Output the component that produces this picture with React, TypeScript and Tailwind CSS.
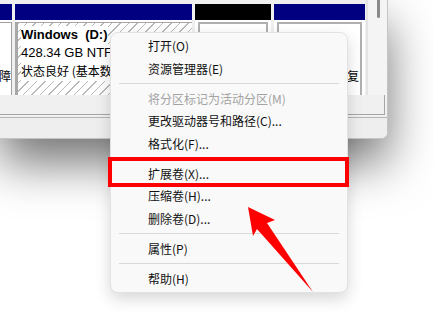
import React from "react";

type Item = { t: string; d?: boolean } | "sep";

const items: Item[] = [
  { t: "打开(O)" },
  { t: "资源管理器(E)" },
  "sep",
  { t: "将分区标记为活动分区(M)", d: true },
  { t: "更改驱动器号和路径(C)..." },
  { t: "格式化(F)..." },
  "sep",
  { t: "扩展卷(X)..." },
  { t: "压缩卷(H)..." },
  { t: "删除卷(D)..." },
  "sep",
  { t: "属性(P)" },
  "sep",
  { t: "帮助(H)" },
];

export default function App() {
  return (
    <div className="relative w-[433px] h-[313px] overflow-hidden bg-white font-['Liberation_Sans','Noto_Sans_CJK_SC',sans-serif] text-[12px] text-black">
      {/* Background window */}
      <div className="flex flex-col w-[388px] h-[139px] bg-[#f0f0f0] border-r border-b border-[#c4c4c4] rounded-br-[6px] shadow-[0_24px_48px_rgba(0,0,0,0.55)]">
        <div className="flex h-[95px]">
          {/* main volume area */}
          <div className="flex w-[366px] gap-[3px] pt-[4px] bg-[#f0f0f0] overflow-hidden">
            {/* col 1 */}
            <div className="flex flex-col w-[12px] shrink-0">
              <div className="h-[16px] bg-[#000080]" />
              <div className="flex-1 bg-white pt-[2px]">
                <div className="h-full border-t border-r border-[#a0a0a0] overflow-hidden flex flex-col justify-end pb-[10px]">
                  <div className="flex justify-end whitespace-nowrap leading-[18px] font-['Noto_Sans_CJK_SC',sans-serif]">故障</div>
                </div>
              </div>
            </div>
            {/* col 2 - Windows D: */}
            <div className="flex flex-col w-[177px] shrink-0">
              <div className="h-[16px] bg-[#000080]" />
              <div className="flex-1 bg-white pt-[2px]">
                <div className="h-full border-t border-l-[3px] border-[#a8a8a8] bg-[repeating-linear-gradient(-45deg,#ffffff_0px,#ffffff_5px,#b8b8b8_5px,#b8b8b8_6px)] pt-[3px] pl-[3px] overflow-hidden">
                  <div className="flex flex-col items-start leading-[18px] whitespace-nowrap">
                    <span className="bg-white font-bold text-[13px]">Windows&nbsp;&nbsp;(D:)</span>
                    <span className="bg-white text-[13px]">428.34 GB NTFS</span>
                    <span className="bg-white">
                      <span className="font-['Noto_Sans_CJK_SC',sans-serif]">状态良好 (基本数据分区)</span>
                    </span>
                  </div>
                </div>
              </div>
            </div>
            {/* col 3 */}
            <div className="flex flex-col w-[76px] shrink-0">
              <div className="h-[16px] bg-black" />
              <div className="flex-1 bg-white pt-[2px] px-[3px]">
                <div className="h-full border-t-2 border-x-2 border-[#b0b0b0]" />
              </div>
            </div>
            {/* col 4 */}
            <div className="flex flex-col w-[91px] shrink-0">
              <div className="h-[16px] bg-[#000080]" />
              <div className="flex-1 bg-white pt-[2px] px-[3px]">
                <div className="h-full border-t-2 border-x-2 border-[#b0b0b0] flex flex-col justify-end pb-[10px] pr-[1px] overflow-hidden">
                  <div className="flex justify-end whitespace-nowrap leading-[18px] font-['Noto_Sans_CJK_SC',sans-serif]">(恢复</div>
                </div>
              </div>
            </div>
          </div>
          {/* vertical scrollbar */}
          <div className="flex-1 border-l-2 border-[#e4e4e4] bg-[#f4f4f4] relative">
            <div className="absolute left-[9px] top-0 w-[3px] h-[18px] rounded-b-full bg-[#8a8a8a]" />
          </div>
        </div>
        <div className="h-[20px] mr-[2px] bg-[#f0f0f0] border-b border-r border-[#a6a6a6]" />
        <div className="flex-1 mt-[2px] border-t border-[#b4b4b4] bg-[#eeeeee] rounded-br-[6px]" />
      </div>

      {/* Context menu */}
      <div className="absolute left-[110px] top-[32px] w-[238px] py-[2px] bg-[#f9f9f9] border border-[#e2e2e2] rounded-[8px] shadow-[0_6px_16px_rgba(0,0,0,0.16)] font-['Noto_Sans_CJK_SC',sans-serif]">
        {items.map((it, i) =>
          it === "sep" ? (
            <div key={i} className="h-[7.5px] flex items-center px-[8px]">
              <div className="h-px w-full bg-[#d8d8d8]" />
            </div>
          ) : (
            <div
              key={i}
              className={
                "h-[22.5px] flex items-center pl-[37px] text-[12px] whitespace-nowrap " +
                (it.d ? "text-[#a3a3a3]" : "text-[#111111]")
              }
            >
              {it.t}
            </div>
          )
        )}
      </div>

      {/* Red highlight box */}
      <div className="absolute left-[108px] top-[157px] w-[241px] h-[30px] border-4 border-[#ff0000]" />

      {/* Red arrow */}
      <svg className="absolute left-0 top-0" width="433" height="313" viewBox="0 0 433 313">
        <polygon
          points="248,207 275,220 267,223 313,292 257,229 253,236"
          fill="#ff0000"
        />
      </svg>
    </div>
  );
}
